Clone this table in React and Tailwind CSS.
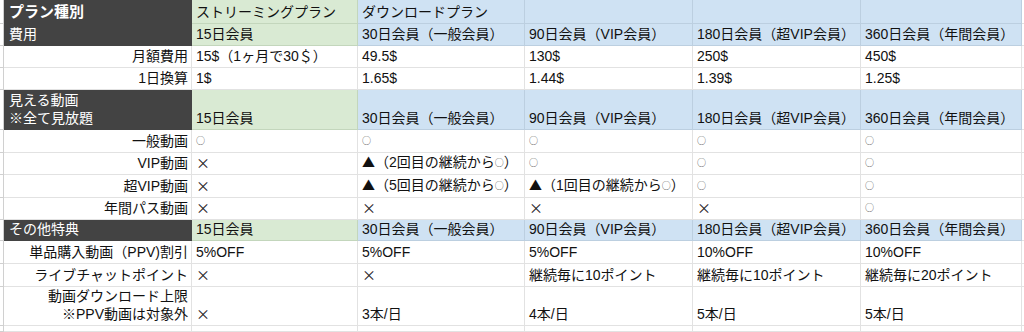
import React from 'react';

const FONT = { fontFamily: '"Liberation Sans", "Noto Sans CJK JP", sans-serif' };

// cell kinds: d = dark header, g = green, b = blue, l = right aligned label, '' = plain
const rows = [
  { h: 'h-[24px]', cells: [['d', 'プラン種別', 'bold'], ['g', 'ストリーミングプラン'], ['b', 'ダウンロードプラン'], ['b', ''], ['b', ''], ['b', '']] },
  { h: 'h-[22px]', cells: [['d', '費用'], ['g', '15日会員'], ['b', '30日会員（一般会員）'], ['b', '90日会員（VIP会員）'], ['b', '180日会員（超VIP会員）'], ['b', '360日会員（年間会員）']] },
  { h: 'h-[22px]', cells: [['l', '月額費用'], ['', '15$（1ヶ月で30＄）'], ['', '49.5$'], ['', '130$'], ['', '250$'], ['', '450$']] },
  { h: 'h-[22px]', cells: [['l', '1日換算'], ['', '1$'], ['', '1.65$'], ['', '1.44$'], ['', '1.39$'], ['', '1.25$']] },
  { h: 'h-[40px]', cells: [['d', '見える動画\n※全て見放題'], ['g', '15日会員'], ['b', '30日会員（一般会員）'], ['b', '90日会員（VIP会員）'], ['b', '180日会員（超VIP会員）'], ['b', '360日会員（年間会員）']] },
  { h: 'h-[23px]', cells: [['l', '一般動画'], ['', '○'], ['', '○'], ['', '○'], ['', '○'], ['', '○']] },
  { h: 'h-[22px]', cells: [['l', 'VIP動画'], ['', '×'], ['', '▲（2回目の継続から○）'], ['', '○'], ['', '○'], ['', '○']] },
  { h: 'h-[23px]', cells: [['l', '超VIP動画'], ['', '×'], ['', '▲（5回目の継続から○）'], ['', '▲（1回目の継続から○）'], ['', '○'], ['', '○']] },
  { h: 'h-[22px]', cells: [['l', '年間パス動画'], ['', '×'], ['', '×'], ['', '×'], ['', '×'], ['', '○']] },
  { h: 'h-[21px]', cells: [['d', 'その他特典'], ['g', '15日会員'], ['b', '30日会員（一般会員）'], ['b', '90日会員（VIP会員）'], ['b', '180日会員（超VIP会員）'], ['b', '360日会員（年間会員）']] },
  { h: 'h-[23px]', cells: [['l', '単品購入動画（PPV)割引'], ['', '5%OFF'], ['', '5%OFF'], ['', '5%OFF'], ['', '10%OFF'], ['', '10%OFF']] },
  { h: 'h-[23px]', cells: [['l', 'ライブチャットポイント'], ['', '×'], ['', '×'], ['', '継続毎に10ポイント'], ['', '継続毎に10ポイント'], ['', '継続毎に20ポイント']] },
  { h: 'h-[39px]', cells: [['l', '動画ダウンロード上限\n※PPV動画は対象外'], ['', '×'], ['', '3本/日'], ['', '4本/日'], ['', '5本/日'], ['', '5本/日']] },
  { h: 'h-[6px]', cells: [['l', ''], ['', ''], ['', ''], ['', ''], ['', ''], ['', '']] },
];

const kindClass = {
  d: 'bg-[#434343] text-white border-[#434343] justify-start pl-[5px]',
  g: 'bg-[#d9ead3] text-[#111] border-[#c3d6bc] justify-start pl-[4px]',
  b: 'bg-[#cfe2f3] text-[#111] border-[#bccfe0] justify-start pl-[4px]',
  l: 'bg-white text-[#111] border-[#e2e2e2] justify-end text-right pr-[3px]',
  '': 'bg-white text-[#111] border-[#e2e2e2] justify-start pl-[4px]',
};

// circles, crosses and triangles come from the Japanese font, like the sheet
function CellText({ text }) {
  return text.split(/([○×▲])/).map((p, i) => {
    if (p === '○') return <span key={i} className="font-['Noto_Sans_CJK_JP'] text-[9px] text-[#555] align-[1px]">○</span>;
    if (p === '×') return <span key={i} className="font-['Noto_Sans_CJK_JP'] text-[#222]">×</span>;
    if (p === '▲') return <span key={i} className="font-['Noto_Sans_CJK_JP'] text-[13px]">▲</span>;
    return <React.Fragment key={i}>{p}</React.Fragment>;
  });
}

export default function App() {
  return (
    <div className="w-[1024px] h-[332px] overflow-hidden bg-white text-[14px] leading-[18px]" style={FONT}>
      {rows.map((row, r) => (
        <div key={r} className={`grid grid-cols-[4px_188px_166px_167px_168px_168px_161px_1fr] ${row.h}`}>
          <div className="border-r border-b border-[#d0d0d0]" />
          {row.cells.map(([kind, text, weight], c) => (
            <div
              key={c}
              className={`flex items-end pb-[2px] border-r border-b whitespace-pre-line overflow-hidden ${kindClass[kind]} ${
                weight === 'bold' ? 'font-bold text-[15px]' : ''
              }`}
            >
              <span className="whitespace-pre-line">
                <CellText text={text} />
              </span>
            </div>
          ))}
          <div className="border-b border-[#e2e2e2]" />
        </div>
      ))}
    </div>
  );
}
